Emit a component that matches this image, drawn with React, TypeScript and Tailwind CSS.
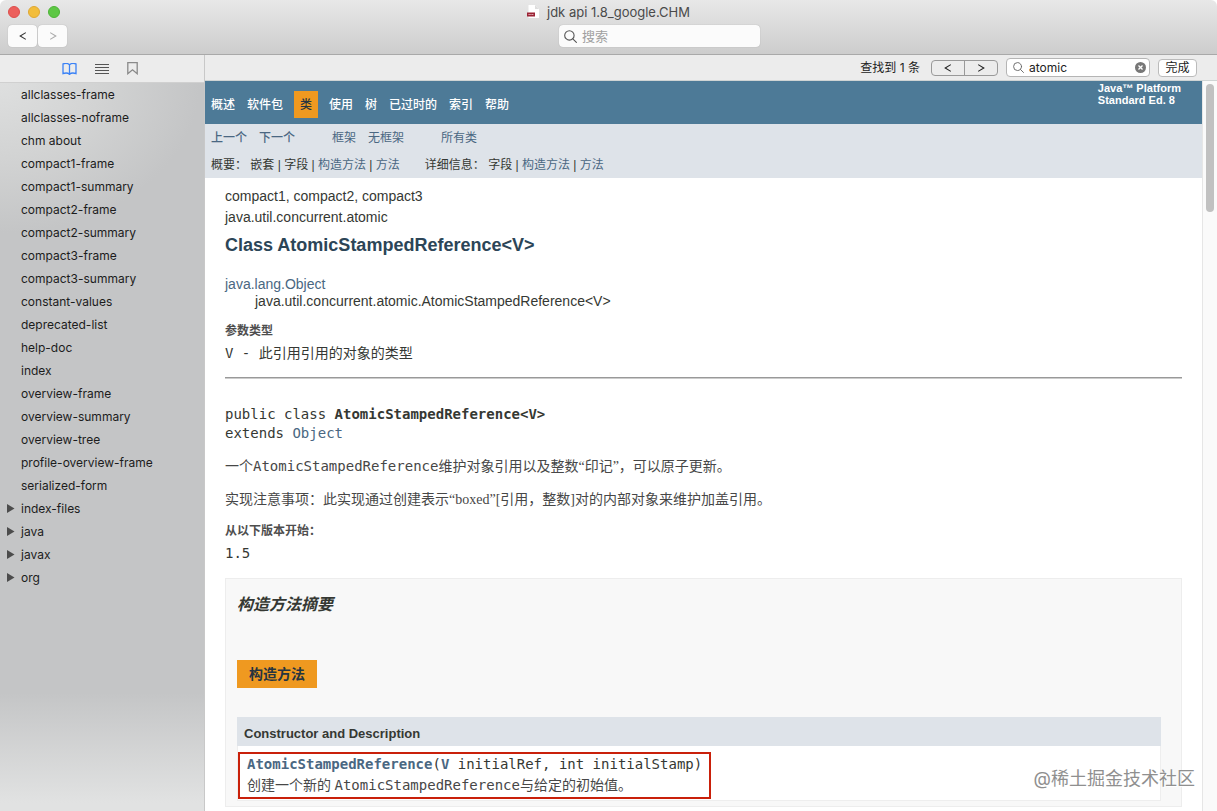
import React from 'react'

const files = [
  'allclasses-frame', 'allclasses-noframe', 'chm about', 'compact1-frame', 'compact1-summary',
  'compact2-frame', 'compact2-summary', 'compact3-frame', 'compact3-summary', 'constant-values',
  'deprecated-list', 'help-doc', 'index', 'overview-frame', 'overview-summary', 'overview-tree',
  'profile-overview-frame', 'serialized-form',
]
const folders = ['index-files', 'java', 'javax', 'org']

const sans = "font-['Liberation_Sans','Noto_Sans_CJK_SC',sans-serif]"
const mono = "font-['DejaVu_Sans_Mono','Noto_Sans_CJK_SC',monospace]"
const serif = "font-['Liberation_Serif','Noto_Sans_CJK_SC',serif]"

function Chevron({ left = false }: { left?: boolean }) {
  return (
    <svg viewBox="0 0 8 8" className="h-2 w-2" fill="none" stroke="currentColor" strokeWidth="1.1" aria-hidden="true">
      <path d={left ? 'M6.8 .6 1.2 4l5.6 3.4' : 'M1.2 .6 6.8 4l-5.6 3.4'} />
    </svg>
  )
}

function Magnifier({ className }: { className: string }) {
  return (
    <svg viewBox="0 0 13 13" className={className} fill="none" stroke="currentColor" strokeWidth="1.1" strokeLinecap="round" aria-hidden="true">
      <circle cx="5.4" cy="5.4" r="4.7" />
      <path d="m8.8 8.8 3.6 3.6" />
    </svg>
  )
}

function TitleBar() {
  return (
    <header className="flex h-[55px] shrink-0 flex-col border-b border-[#a9a9a9] bg-linear-to-b from-[#e8e8e8] to-[#cdcdcd]">
      <div className="grid h-6 grid-cols-[1fr_auto_1fr] items-center">
        <div className="flex gap-2 pl-2">
          <button aria-label="关闭" className="h-3 w-3 rounded-full border border-[#dc4f4c] bg-[#ec5f5c]" />
          <button aria-label="最小化" className="h-3 w-3 rounded-full border border-[#dfa733] bg-[#f2bd3b]" />
          <button aria-label="缩放" className="h-3 w-3 rounded-full border border-[#4cb336] bg-[#5dc744]" />
        </div>
        <h1 className="flex items-center gap-2 pb-px text-[13px] leading-4 text-[#4a4a4a]">
          <svg viewBox="0 0 12 13" className="h-[13px] w-3" aria-hidden="true">
            <path d="M1.500 0h6.500l4 4v9H1.500z" fill="#fff" />
            <path d="m8 0 4 4H8z" fill="#ddd" />
            <rect y="7.500" width="8" height="4" fill="#9b2335" />
            <path d="M1.500 9.500h5" stroke="#e3b6bb" strokeDasharray="1.300 .5" />
          </svg>
          jdk api 1.8_google.CHM
        </h1>
      </div>
      <div className="grid grid-cols-[1fr_auto_1fr] pt-px">
        <div className="flex gap-px pl-2">
          <button aria-label="后退" className="flex h-[22px] w-[29px] items-center justify-center rounded-[4px] bg-[#fbfbfb] text-[#333] shadow-[0_0_1px_#999]"><Chevron left /></button>
          <button aria-label="前进" className="flex h-[22px] w-[29px] items-center justify-center rounded-[4px] bg-[#fbfbfb] text-[#aaa] shadow-[0_0_1px_#999]"><Chevron /></button>
        </div>
        <div className="pl-[102px]">
          <label className="flex h-[22px] w-[201px] items-center gap-[5px] rounded-[4px] bg-[#fbfbfb] px-[5px] shadow-[0_0_1px_#999]">
            <Magnifier className="h-[13px] w-[13px] text-[#555]" />
            <input aria-label="搜索" placeholder="搜索" className="min-w-0 flex-1 bg-transparent text-[13px] leading-4 outline-none placeholder:text-[#a0a0a0]" />
          </label>
        </div>
      </div>
    </header>
  )
}

function Sidebar() {
  return (
    <aside className="flex w-[205px] shrink-0 flex-col border-r border-[#c8c8c8] text-[12px] text-[#1c1c1c]">
      <div className="flex h-7 items-center gap-[18px] border-b border-[#d0d0d0] bg-[#ececec] pl-[62px]">
        <button aria-label="目录" className="text-[#3b82f6]">
          <svg viewBox="0 0 15 12" className="h-3 w-[15px]" fill="none" stroke="currentColor" strokeWidth="1.300" aria-hidden="true">
            <path d="M7.500 1.700C6 .3 3 .3 1 .9v9.700c2-.7 5-.7 6.500.7V1.700zm0 0C9 .3 12 .3 14 .9v9.700c-2-.7-5-.7-6.500.7z" />
          </svg>
        </button>
        <button aria-label="列表" className="text-[#555]">
          <svg viewBox="0 0 14 12" className="h-3 w-3.5" stroke="currentColor" strokeWidth="1" aria-hidden="true"><path d="M0 1.500h14M0 4.500h14M0 7.500h14M0 10.500h14" /></svg>
        </button>
        <button aria-label="书签" className="text-[#8a8a8a]">
          <svg viewBox="0 0 11 13" className="h-[13px] w-[11px]" fill="none" stroke="currentColor" strokeWidth="1.300" aria-hidden="true"><path d="M.8.7h9.400v11L5.500 7.800.8 11.700z" /></svg>
        </button>
      </div>
      <nav aria-label="目录" className="flex-1 bg-[linear-gradient(to_bottom,transparent_610px,#e1e2e2_720px),radial-gradient(ellipse_200px_150px_at_0_0,#dedfdf_0%,#d2d3d3_50%,#c4c5c6_100%)]">
        <ul>
          {files.map((name) => (
            <li key={name} className="h-[23px] pl-[21px] leading-[23px]"><a href="#">{name}</a></li>
          ))}
          {folders.map((name) => (
            <li key={name} className="flex h-[23px] items-center gap-1.5 pl-[7px] leading-[23px]">
              <svg viewBox="0 0 8 9" className="h-[9px] w-2" fill="#4c4c4c" aria-hidden="true"><path d="M0 0 7.500 4.500 0 9z" /></svg>
              <a href="#">{name}</a>
            </li>
          ))}
        </ul>
      </nav>
    </aside>
  )
}

function FindBar() {
  return (
    <div className="flex h-[26px] shrink-0 items-center justify-end border-b border-[#cfd4d4] bg-[#ececec] pr-5 text-[12px] text-[#222]">
      <span className="pr-[11px]">查找到 1 条</span>
      <div className="flex h-4 w-[67px] rounded-[4px] border border-[#999]">
        <button aria-label="上一个结果" className="flex flex-1 items-center justify-center border-r border-[#999]"><Chevron left /></button>
        <button aria-label="下一个结果" className="flex flex-1 items-center justify-center"><Chevron /></button>
      </div>
      <div className="ml-2 flex h-[19px] w-36 items-center gap-[5px] rounded-[4px] border border-[#b5b5b5] bg-white pl-1.5 pr-[3px]">
        <Magnifier className="h-[11px] w-[11px] shrink-0 text-[#666]" />
        <input aria-label="页内查找" defaultValue="atomic" className="min-w-0 flex-1 bg-transparent outline-none" />
        <button aria-label="清除" className="shrink-0">
          <svg viewBox="0 0 12 12" className="h-[11px] w-[11px]" aria-hidden="true"><circle cx="6" cy="6" r="6" fill="#777" /><path d="m3.800 3.800 4.400 4.400m0-4.400L3.800 8.200" stroke="#fff" strokeWidth="1.400" /></svg>
        </button>
      </div>
      <button className="ml-2 flex h-[18px] w-[39px] items-center justify-center rounded-[4px] border border-[#bbb] bg-white">完成</button>
    </div>
  )
}

const link = 'text-[#4a6782]'

function DocNav() {
  return (
    <>
      <div className="flex h-[43px] items-center justify-between bg-[#4d7a97] text-[12px] font-medium text-white">
        <nav aria-label="主导航" className="flex items-center pl-1.5 pt-1">
          <a href="#" className="mr-3">概述</a>
          <a href="#" className="mr-[11px]">软件包</a>
          <span className="mr-[11px] flex h-[27px] w-6 items-center justify-center bg-[#ef9920] text-[#253441]">类</span>
          <a href="#" className="mr-3">使用</a>
          <a href="#" className="mr-3">树</a>
          <a href="#" className="mr-3">已过时的</a>
          <a href="#" className="mr-3">索引</a>
          <a href="#">帮助</a>
        </nav>
        <p className="self-start pr-[21px] pt-px text-[11px] font-bold leading-3">Java™ Platform<br />Standard Ed. 8</p>
      </div>
      <div className="h-[54px] bg-[#dee3e9] pl-1.5 text-[12px]">
        <div className={`flex h-[27px] items-center ${link}`}>
          <a href="#" className="mr-3 font-medium">上一个</a>
          <a href="#" className="mr-[37px] font-medium">下一个</a>
          <a href="#" className="mr-3">框架</a>
          <a href="#" className="mr-[37px]">无框架</a>
          <a href="#">所有类</a>
        </div>
        <div className="flex h-[27px] items-center text-[#353833]">
          <p className="mr-[25px]">
            概要：{' '}嵌套 | 字段 | <a href="#" className={link}>构造方法</a> | <a href="#" className={link}>方法</a>
          </p>
          <p>
            详细信息：{' '}字段 | <a href="#" className={link}>构造方法</a> | <a href="#" className={link}>方法</a>
          </p>
        </div>
      </div>
    </>
  )
}

function DocBody() {
  return (
    <main className="px-5 pt-2 text-[14px] text-[#353833]">
      <p className="leading-[21px]">compact1, compact2, compact3</p>
      <p className="leading-[21px]">java.util.concurrent.atomic</p>
      <h2 className="pt-[5px] text-[18px] font-bold leading-6 text-[#2c4557]">Class AtomicStampedReference&lt;V&gt;</h2>
      <div className="pt-[19px] leading-[17px]">
        <a href="#" className={link}>java.lang.Object</a>
        <p className="pl-[30px]">java.util.concurrent.atomic.AtomicStampedReference&lt;V&gt;</p>
      </div>
      <dl className="pt-3">
        <dt className="text-[12px] font-bold leading-[18px] text-[#4e4e4e]">参数类型</dt>
        <dd className={`pt-[3px] leading-5 ${mono}`}>V - 此引用引用的对象的类型</dd>
      </dl>
      <hr className="mt-3.5 h-0.5 border-b border-t border-b-[#ccc] border-t-[#999]" />
      <p className={`pt-[26px] leading-[19px] ${mono}`}>
        public class <strong>AtomicStampedReference&lt;V&gt;</strong><br />
        extends <a href="#" className={link}>Object</a>
      </p>
      <p className={`pt-3 leading-[22px] text-[#474747] ${serif}`}>
        一个<code className={mono}>AtomicStampedReference</code>维护对象引用以及整数“印记”，可以原子更新。
      </p>
      <p className={`pt-[11px] leading-[22px] text-[#474747] ${serif}`}>实现注意事项：此实现通过创建表示“boxed”[引用，整数]对的内部对象来维护加盖引用。</p>
      <dl className="pt-[11px]">
        <dt className="text-[12px] font-bold leading-[18px] text-[#4e4e4e]">从以下版本开始：</dt>
        <dd className={`pt-[3px] leading-5 ${mono}`}>1.5</dd>
      </dl>
      <section className="mt-[15px] border border-[#ededed] bg-[#f8f8f8] pb-[5px] pl-[11px] pr-5 pt-[15px]">
        <h3 className="text-[16px] font-bold italic leading-[22px]">构造方法摘要</h3>
        <table className="mt-11 w-full border-separate border-spacing-0 text-left">
          <caption className="pb-[29px] text-left font-bold leading-7 text-[#253441]">
            <span className="inline-block bg-[#ef9920] px-3">构造方法</span>
          </caption>
          <thead>
            <tr className="bg-[#dee3e9]"><th className="h-[29px] px-[7px] pb-0 pt-1 text-[13px] font-bold leading-6">Constructor and Description</th></tr>
          </thead>
          <tbody>
            <tr>
              <td className="border border-t-0 border-[#eee] bg-white p-0 pb-px pt-1.5">
                <div className={`w-fit max-w-full border-2 border-[#c9200a] pl-[7px] pr-[7px] ${mono}`}>
                  <p className="leading-5"><a href="#" className={`font-bold ${link}`}>AtomicStampedReference</a>(<a href="#" className={`font-bold ${link}`}>V</a> initialRef, int initialStamp)</p>
                  <p className={`leading-[22px] text-[#474747] ${serif}`}>创建一个新的 <code className={mono}>AtomicStampedReference</code>与给定的初始值。</p>
                </div>
              </td>
            </tr>
          </tbody>
        </table>
      </section>
    </main>
  )
}

export default function App() {
  return (
    <div className="relative flex h-screen flex-col overflow-hidden rounded-t-md bg-white font-['Inter','Noto_Sans_CJK_SC',sans-serif]">
      <TitleBar />
      <div className="flex min-h-0 flex-1">
        <Sidebar />
        <div className="flex min-w-0 flex-1 flex-col">
          <FindBar />
          <div className="flex min-h-0 flex-1">
            <div className={`min-w-0 flex-1 overflow-hidden ${sans}`}>
              <DocNav />
              <DocBody />
            </div>
            <div className="w-[15px] shrink-0 border-l border-[#e6e6e6] bg-[#fafafa] px-[3px] pt-[3px]">
              <div className="h-32 w-2 rounded-full bg-[#c1c1c1]" />
            </div>
          </div>
        </div>
      </div>
      <p className="pointer-events-none absolute bottom-5 right-[22px] text-[18px] leading-6 text-[#8f8f8f] [text-shadow:1px_1px_0_white]">@稀土掘金技术社区</p>
    </div>
  )
}
